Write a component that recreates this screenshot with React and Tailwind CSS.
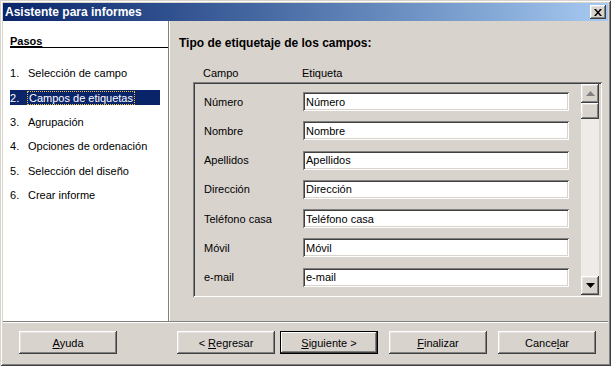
import React from 'react';

const raised = 'shadow-[inset_-1px_-1px_#404040,inset_1px_1px_#ffffff,inset_-2px_-2px_#808080,inset_2px_2px_#e6e2de]';
const sunken = 'shadow-[inset_1px_1px_#808080,inset_-1px_-1px_#ffffff,inset_2px_2px_#404040,inset_-2px_-2px_#d9d3ce]';

const steps = [
    'Selección de campo',
    'Campos de etiquetas',
    'Agrupación',
    'Opciones de ordenación',
    'Selección del diseño',
    'Crear informe',
];

const fields = ['Número', 'Nombre', 'Apellidos', 'Dirección', 'Teléfono casa', 'Móvil', 'e-mail'];

const Button = ({ children, isDefault }) => (
    <div className={`w-[98px] h-[23px] flex items-center justify-center bg-[#d9d3ce] ${isDefault ? 'border border-black shadow-[inset_-1px_-1px_#404040,inset_1px_1px_#ffffff,inset_-2px_-2px_#808080]' : raised}`}>
        {children}
    </div>
);

const App = () => {
    return (
        <div
            className="w-[611px] h-[366px] bg-[#d9d3ce] flex flex-col p-[3px] text-[11px] leading-[14px] text-black shadow-[inset_1px_1px_#d9d3ce,inset_-1px_-1px_#404040,inset_2px_2px_#ffffff,inset_-2px_-2px_#808080]"
            style={{ fontFamily: '"Liberation Sans", Arial, sans-serif' }}
        >
            {/* Title bar */}
            <div className="h-[18px] flex items-center pl-[2px] pr-[2px] bg-gradient-to-r from-[#0a246a] to-[#a6caf0]">
                <span className="text-white font-bold text-[12px]">Asistente para informes</span>
                <div className={`ml-auto w-[16px] h-[14px] bg-[#d9d3ce] flex items-center justify-center ${raised}`}>
                    <svg width="8" height="7" viewBox="0 0 8 7">
                        <path d="M0 0h2l2 2.5L6 0h2L5 3.5 8 7H6L4 4.5 2 7H0l3-3.5z" fill="#000" />
                    </svg>
                </div>
            </div>

            {/* Main */}
            <div className="h-[300px] flex">
                {/* Steps */}
                <div className="w-[165px] bg-white pt-[13px]">
                    <div className="ml-[7px] border-b border-black font-bold underline h-[14px]">Pasos</div>
                    <div className="mt-[13px]">
                        {steps.map((s, i) => (
                            <div key={s} className="h-[24.4px] flex items-center">
                                {i === 1 ? (
                                    <div className="ml-[7px] w-[150px] h-[15px] bg-[#0a246a] text-white flex items-center">
                                        <span className="w-[17px]">{i + 1}.</span>
                                        <span className="border border-dotted border-[#f0c040] px-[1px] leading-[12px]">{s}</span>
                                    </div>
                                ) : (
                                    <div className="ml-[7px] flex items-center">
                                        <span className="w-[18px]">{i + 1}.</span>
                                        <span>{s}</span>
                                    </div>
                                )}
                            </div>
                        ))}
                    </div>
                </div>
                <div className="w-[2px] border-l border-[#808080] bg-white" />

                {/* Content */}
                <div className="flex-1 pl-[9px] pt-[15px]">
                    <div className="font-bold text-[12px]">Tipo de etiquetaje de los campos:</div>
                    <div className="flex mt-[16px]">
                        <span className="ml-[24px] w-[99px]">Campo</span>
                        <span>Etiqueta</span>
                    </div>
                    <div className={`ml-[14px] mt-[2px] w-[409px] h-[215px] flex p-[2px] ${sunken}`}>
                        <div className="flex-1 pl-[9px] pt-[8px] flex flex-col gap-[10.3px]">
                            {fields.map((f) => (
                                <div key={f} className="flex items-center h-[19px]">
                                    <span className="w-[99px]">{f}</span>
                                    <div className={`w-[266px] h-[19px] bg-white flex items-center pl-[3px] ${sunken}`}>{f}</div>
                                </div>
                            ))}
                        </div>
                        {/* Scrollbar */}
                        <div className="w-[18px] mr-[1px] flex flex-col bg-[#efebe8]">
                            <div className={`h-[19px] bg-[#d9d3ce] flex items-center justify-center ${raised}`}>
                                <svg width="9" height="5" viewBox="0 0 9 5"><path d="M4.5 0L9 5H0z" fill="#808080" /></svg>
                            </div>
                            <div className={`h-[16px] bg-[#d9d3ce] ${raised}`} />
                            <div className="flex-1" />
                            <div className={`h-[19px] bg-[#d9d3ce] flex items-center justify-center ${raised}`}>
                                <svg width="9" height="5" viewBox="0 0 9 5"><path d="M0 0h9L4.5 5z" fill="#000" /></svg>
                            </div>
                        </div>
                    </div>
                </div>
            </div>

            {/* Separator */}
            <div className="h-[2px] border-t border-[#808080] bg-white" />

            {/* Buttons */}
            <div className="h-[40px] pt-[8px] flex pl-[16px]">
                <Button><span><u>A</u>yuda</span></Button>
                <div className="ml-[60px]"><Button><span>&lt; <u>R</u>egresar</span></Button></div>
                <div className="ml-[5px]"><Button isDefault><span><u>S</u>iguiente &gt;</span></Button></div>
                <div className="ml-[11px]"><Button><span><u>F</u>inalizar</span></Button></div>
                <div className="ml-[11px]"><Button><span>Cance<u>l</u>ar</span></Button></div>
            </div>
        </div>
    );
};

export default App;
